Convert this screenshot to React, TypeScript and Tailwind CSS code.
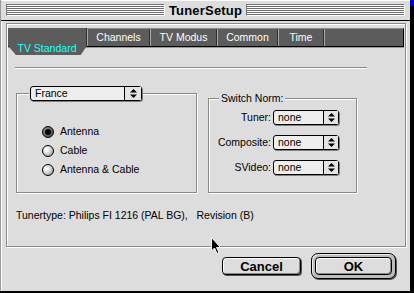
import React from "react";

const font = { fontFamily: '"Liberation Sans", Arial, sans-serif' };

function Arrows() {
  return (
    <svg width="7" height="9" viewBox="0 0 7 9">
      <path d="M3.5 0 L7 3.5 L0 3.5 Z" fill="#000" />
      <path d="M0 5.5 L7 5.5 L3.5 9 Z" fill="#000" />
    </svg>
  );
}

function Popup({ label, w, arrowW = 15 }: { label: string; w: number; arrowW?: number }) {
  return (
    <div
      className="flex h-[15px] rounded-[3px] border border-black bg-[#eeeeee] shadow-[1px_1px_0_#808080]"
      style={{ width: w }}
    >
      <div className="flex-1 pl-[4px] text-[10.5px] leading-[13px] text-black">{label}</div>
      <div
        className="flex items-center justify-center border-l border-black bg-[#e4e4e4]"
        style={{ width: arrowW }}
      >
        <Arrows />
      </div>
    </div>
  );
}

function Radio({ label, on }: { label: string; on?: boolean }) {
  return (
    <div className="flex items-center h-[12px]">
      <div
        className={
          "w-[12px] h-[12px] rounded-full border border-black flex items-center justify-center " +
          (on
            ? "bg-[radial-gradient(circle_at_35%_35%,#9a9a9a,#3a3a3a)]"
            : "bg-[radial-gradient(circle_at_35%_35%,#ffffff_10%,#c8c8c8_55%,#7a7a7a)]")
        }
      >
        {on && <div className="w-[6px] h-[6px] rounded-full bg-black" />}
      </div>
      <span className="ml-[6px] text-[10.5px] text-black">{label}</span>
    </div>
  );
}

function Tab({ label, w }: { label: string; w: number }) {
  return (
    <div
      className="h-full flex items-center justify-center border-l border-[#a8a8a8] border-r border-r-[#2e2e2e] text-white text-[10.5px]"
      style={{ width: w }}
    >
      {label}
    </div>
  );
}

function Stripes() {
  return (
    <div className="flex-1 h-[12px] border-l border-t border-[#777] border-r-white border-b-white border-r border-b bg-[repeating-linear-gradient(to_bottom,#ffffff_0px,#ffffff_1px,#6e6e6e_1px,#6e6e6e_2px)]" />
  );
}

export default function App() {
  return (
    <div className="w-[414px] h-[293px] bg-black relative overflow-hidden" style={font}>
      <div className="absolute right-0 top-0 w-[4px] h-[6px] bg-[#0000c8]" />
      <div className="w-[410px] h-[291px] bg-[#dddddd] border-l border-[#9a9a9a] shadow-[inset_1px_0_0_#ffffff] flex flex-col">
        {/* Title bar */}
        <div className="h-[21px] flex items-center px-[5px] border-b border-black bg-[#dddddd] shadow-[inset_0_1px_0_#ffffff]">
          <Stripes />
          <div className="px-[4px] text-[13px] font-bold text-black leading-none tracking-[0.2px]">TunerSetup</div>
          <Stripes />
        </div>

        {/* Tab panel */}
        <div className="ml-[5px] mt-[2px] w-[400px] h-[224px] border border-[#8a8a8a] shadow-[inset_1px_1px_0_#ffffff,1px_1px_0_#ffffff] flex flex-col">
          {/* Tab bar */}
          <div className="ml-[1px] mt-[4px] w-[396px] h-[19px] bg-[#5c5c5c] border-t border-[#8a8a8a] border-b border-b-black border-r border-r-black flex items-start shadow-[0_1px_0_#9a9a9a]">
            <div className="w-[79px] h-[27px] -mt-px bg-[#5c5c5c] [clip-path:polygon(0_0,100%_0,100%_66%,92%_100%,10%_100%,0_66%)] flex justify-center pt-[13px] text-[10.5px] text-[#22ffff] border-r border-r-[#2e2e2e] shrink-0">
              TV Standard
            </div>
            <Tab label="Channels" w={63} />
            <Tab label="TV Modus" w={67} />
            <Tab label="Common" w={61} />
            <Tab label="Time" w={46} />
            <div className="flex-1 h-full border-l border-[#a8a8a8]" />
          </div>

          {/* separator line */}
          <div className="ml-[8px] mt-[20px] w-[352px] h-[2px] border-t border-[#8a8a8a] border-b border-b-white" />

          {/* groups */}
          <div className="flex items-start mt-[24px]">
            <div className="relative ml-[9px] w-[181px] h-[100px] border border-[#8a8a8a] shadow-[inset_1px_1px_0_#ffffff,1px_1px_0_#ffffff]">
              <div className="absolute left-[12px] -top-[8px] bg-[#dddddd] px-[1px]">
                <Popup label="France" w={112} arrowW={17} />
              </div>
              <div className="flex flex-col gap-[7px] pl-[25px] pt-[32px]">
                <Radio label="Antenna" on />
                <Radio label="Cable" />
                <Radio label="Antenna & Cable" />
              </div>
            </div>

            <div className="relative ml-[11px] mt-[5px] w-[149px] h-[95px] border border-[#8a8a8a] shadow-[inset_1px_1px_0_#ffffff,1px_1px_0_#ffffff]">
              <div className="absolute left-[10px] -top-[7px] bg-[#dddddd] px-[2px] text-[10.5px] leading-[12px] text-black">
                Switch Norm:
              </div>
              <div className="flex flex-col gap-[9px] pt-[11px]">
                {["Tuner:", "Composite:", "SVideo:"].map((l) => (
                  <div key={l} className="flex items-center">
                    <div className="w-[64px] text-right text-[10.5px] text-black pr-[2px]">{l}</div>
                    <Popup label="none" w={66} />
                  </div>
                ))}
              </div>
            </div>
          </div>

          <div className="ml-[9px] mt-[16px] text-[10.5px] leading-[12px] text-black whitespace-pre">
            {"Tunertype: Philips FI 1216 (PAL BG),   Revision (B)"}
          </div>
        </div>

        {/* Buttons */}
        <div className="flex justify-end items-center mt-[6px] pr-[14px]">
          <button className="w-[79px] h-[18px] rounded-[4px] border border-black bg-[#dddddd] shadow-[inset_1px_1px_0_#ffffff,inset_-1px_-1px_0_#8a8a8a,1px_1px_0_#555] text-[13px] font-bold text-black leading-none">
            Cancel
          </button>
          <div className="ml-[10px] w-[85px] h-[26px] rounded-[7px] border border-black bg-[#bdbdbd] shadow-[inset_1px_1px_0_#eeeeee,1px_1px_0_#555] flex items-center justify-center">
            <button className="w-[77px] h-[18px] rounded-[4px] border border-black bg-[#dddddd] shadow-[inset_1px_1px_0_#ffffff,inset_-1px_-1px_0_#8a8a8a] text-[13px] font-bold text-black leading-none">
              OK
            </button>
          </div>
        </div>
      </div>

      {/* cursor */}
      <svg className="absolute left-[211px] top-[237px]" width="12" height="18" viewBox="0 0 12 18">
        <path d="M0.5 0.5 L0.5 14 L3.5 11 L6 16.5 L8 15.5 L5.5 10.5 L9.5 10.5 Z" fill="#000" stroke="#fff" strokeWidth="1" />
      </svg>
    </div>
  );
}
